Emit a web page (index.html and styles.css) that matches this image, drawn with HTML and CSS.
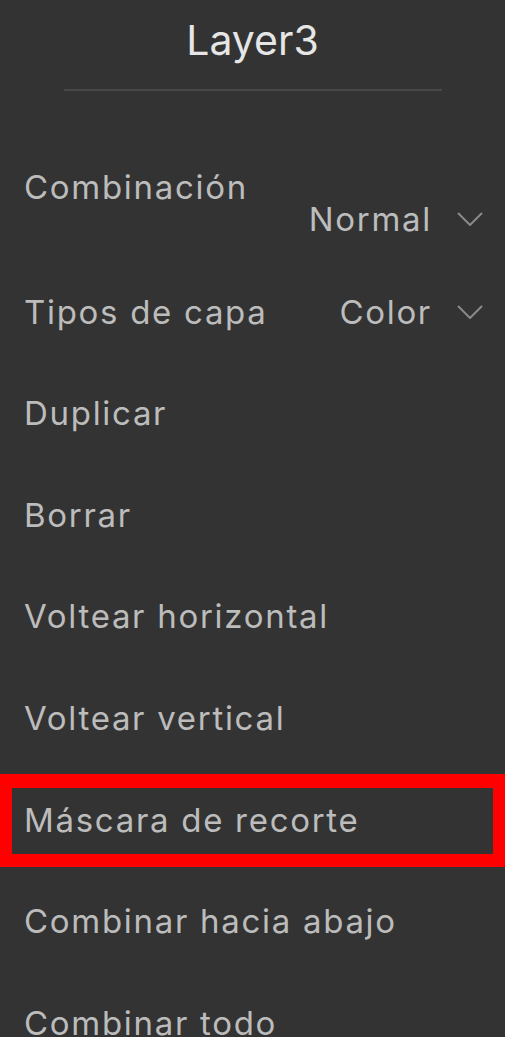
FILE: index.html
```html
<!DOCTYPE html>
<html lang="es">

<head>
    <meta charset="UTF-8">
    <meta name="viewport" content="width=device-width, initial-scale=1.0">
    <title>Layer3</title>
    <link rel="stylesheet" href="styles.css">
</head>

<body>

    <div class="panel">
        <h2 class="title">Layer3</h2>
        <div class="divider"></div>

        <ul class="menu">
            <li class="row row-stack">
                <span class="label">Combinación</span>
                <span class="value">
                    Normal
                    <svg class="chevron" width="26" height="14" viewBox="0 0 26 14">
                        <polyline points="1,1 13,13 25,1" />
                    </svg>
                </span>
            </li>
            <li class="row row-split">
                <span class="label">Tipos de capa</span>
                <span class="value">
                    Color
                    <svg class="chevron" width="26" height="14" viewBox="0 0 26 14">
                        <polyline points="1,1 13,13 25,1" />
                    </svg>
                </span>
            </li>
            <li class="row">Duplicar</li>
            <li class="row">Borrar</li>
            <li class="row">Voltear horizontal</li>
            <li class="row">Voltear vertical</li>
            <li class="row highlight">Máscara de recorte</li>
            <li class="row">Combinar hacia abajo</li>
            <li class="row">Combinar todo</li>
        </ul>
    </div>

</body>

</html>
```

FILE: styles.css
```css
body {
    font-family: Inter, "Noto Sans", sans-serif;
    background-color: #333333;
    margin: 0;
    padding: 0;
    overflow: hidden;
}

.panel {
    padding-top: 15px;
}

.title {
    margin: 0;
    text-align: center;
    font-size: 41px;
    font-weight: 400;
    line-height: 50px;
    color: #e6e6e6;
}

.divider {
    width: 378px;
    height: 2px;
    margin: 24px 0 0 64px;
    background-color: #484848;
}

.menu {
    list-style: none;
    margin: 76px 0 0 0;
    padding: 0;
    display: flex;
    flex-direction: column;
    gap: 61.6px;
}

.row {
    position: relative;
    padding-left: 24px;
    font-size: 33px;
    line-height: 40px;
    letter-spacing: 1.7px;
    color: #bcbcbc;
}

.row-stack .label {
    display: block;
}

.row-stack .value {
    margin-top: -8px;
}

.row-split {
    display: flex;
    justify-content: space-between;
    margin-top: -9px;
}

.value {
    display: flex;
    justify-content: flex-end;
    align-items: center;
    gap: 25px;
    padding-right: 22px;
}

.chevron polyline {
    fill: none;
    stroke: #8a8a8a;
    stroke-width: 2;
}

/* red annotation box */
.highlight::after {
    content: "";
    position: absolute;
    top: -26px;
    bottom: -27px;
    left: 0;
    right: 0;
    border-style: solid;
    border-color: #ff0000;
    border-width: 14px 12px 13px 12px;
}
```
